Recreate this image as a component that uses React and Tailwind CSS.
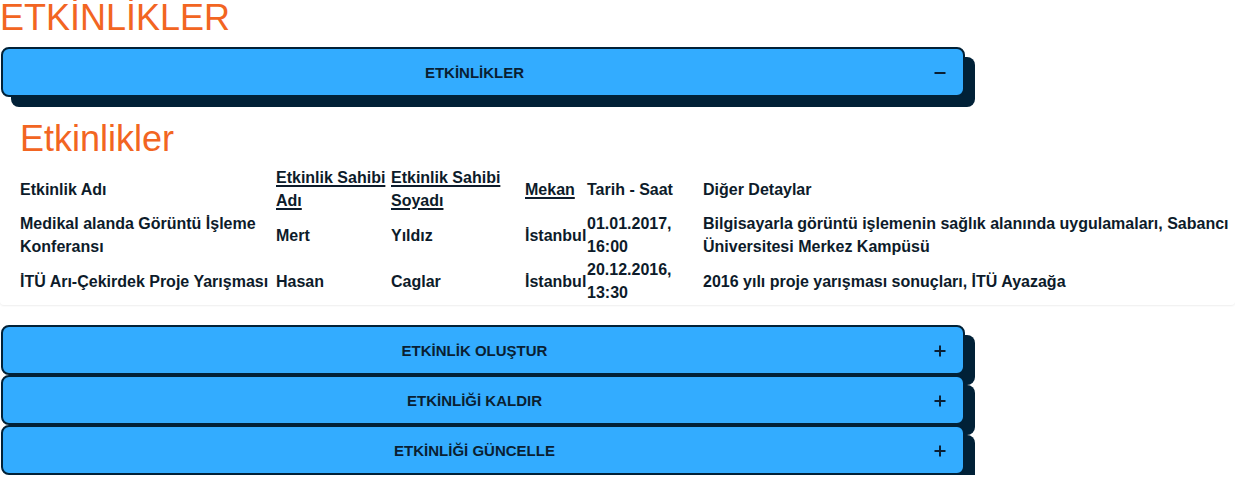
import React from "react";

const rows = [
  {
    ad: "Medikal alanda Görüntü İşleme Konferansı",
    sahipAd: "Mert",
    sahipSoyad: "Yıldız",
    mekan: "İstanbul",
    tarih: "01.01.2017, 16:00",
    detay:
      "Bilgisayarla görüntü işlemenin sağlık alanında uygulamaları, Sabancı Üniversitesi Merkez Kampüsü",
  },
  {
    ad: "İTÜ Arı-Çekirdek Proje Yarışması",
    sahipAd: "Hasan",
    sahipSoyad: "Caglar",
    mekan: "İstanbul",
    tarih: "20.12.2016, 13:30",
    detay: "2016 yılı proje yarışması sonuçları, İTÜ Ayazağa",
  },
];

const ToggleIcon = ({ open }) => (
  <svg width="12" height="12" viewBox="0 0 12 12" className="shrink-0">
    <line x1="0.5" y1="6" x2="11.5" y2="6" stroke="#0a1f33" strokeWidth="2" />
    {!open && (
      <line x1="6" y1="0.5" x2="6" y2="11.5" stroke="#0a1f33" strokeWidth="2" />
    )}
  </svg>
);

const AccordionHeader = ({ title, open }) => (
  <button className="relative z-10 ml-px flex h-[50px] w-[964px] items-center rounded-[8px] border-2 border-[#012137] bg-[#33acff] pt-[2px] pl-[12px] pr-[17px] shadow-[10px_10px_0_#012137]">
    <span className="flex-1 text-center text-[15px] font-bold text-[#0a1f33]">
      {title}
    </span>
    <ToggleIcon open={open} />
  </button>
);

const App = () => {
  return (
    <div className="w-[1235px] bg-white font-['Liberation_Sans',Arial,sans-serif] text-[#0d1b2a]">
      <h1 className="text-[36px] leading-[36px] font-normal text-[#f26522]">
        ETKİNLİKLER
      </h1>

      <section className="mt-[11px]">
        <AccordionHeader title="ETKİNLİKLER" open />
        <div className="rounded-b-[4px] pt-[21px] pb-px pl-[20px] shadow-[0_1px_2px_rgba(0,0,0,0.07)]">
          <h2 className="mb-[7px] text-[36px] leading-[41px] font-normal text-[#f26522]">
            Etkinlikler
          </h2>
          <table className="text-left text-[16px] leading-[23px] font-bold">
            <thead>
              <tr className="align-middle">
                <th className="w-[256px] p-0 font-bold">Etkinlik Adı</th>
                <th className="w-[115px] p-0 font-bold">
                  <a className="underline decoration-2 underline-offset-2">
                    Etkinlik Sahibi Adı
                  </a>
                </th>
                <th className="w-[134px] p-0 font-bold">
                  <a className="underline decoration-2 underline-offset-2">
                    Etkinlik Sahibi Soyadı
                  </a>
                </th>
                <th className="w-[62px] p-0 font-bold">
                  <a className="underline decoration-2 underline-offset-2">
                    Mekan
                  </a>
                </th>
                <th className="w-[116px] p-0 font-bold">Tarih - Saat</th>
                <th className="w-[528px] p-0 font-bold">Diğer Detaylar</th>
              </tr>
            </thead>
            <tbody>
              {rows.map((r) => (
                <tr key={r.ad} className="align-middle">
                  <td className="p-0">{r.ad}</td>
                  <td className="p-0">{r.sahipAd}</td>
                  <td className="p-0">{r.sahipSoyad}</td>
                  <td className="p-0">{r.mekan}</td>
                  <td className="p-0">{r.tarih}</td>
                  <td className="p-0">{r.detay}</td>
                </tr>
              ))}
            </tbody>
          </table>
        </div>
      </section>

      <section className="mt-[20px]">
        <AccordionHeader title="ETKİNLİK OLUŞTUR" />
        <AccordionHeader title="ETKİNLİĞİ KALDIR" />
        <AccordionHeader title="ETKİNLİĞİ GÜNCELLE" />
      </section>
    </div>
  );
};

export default App;
